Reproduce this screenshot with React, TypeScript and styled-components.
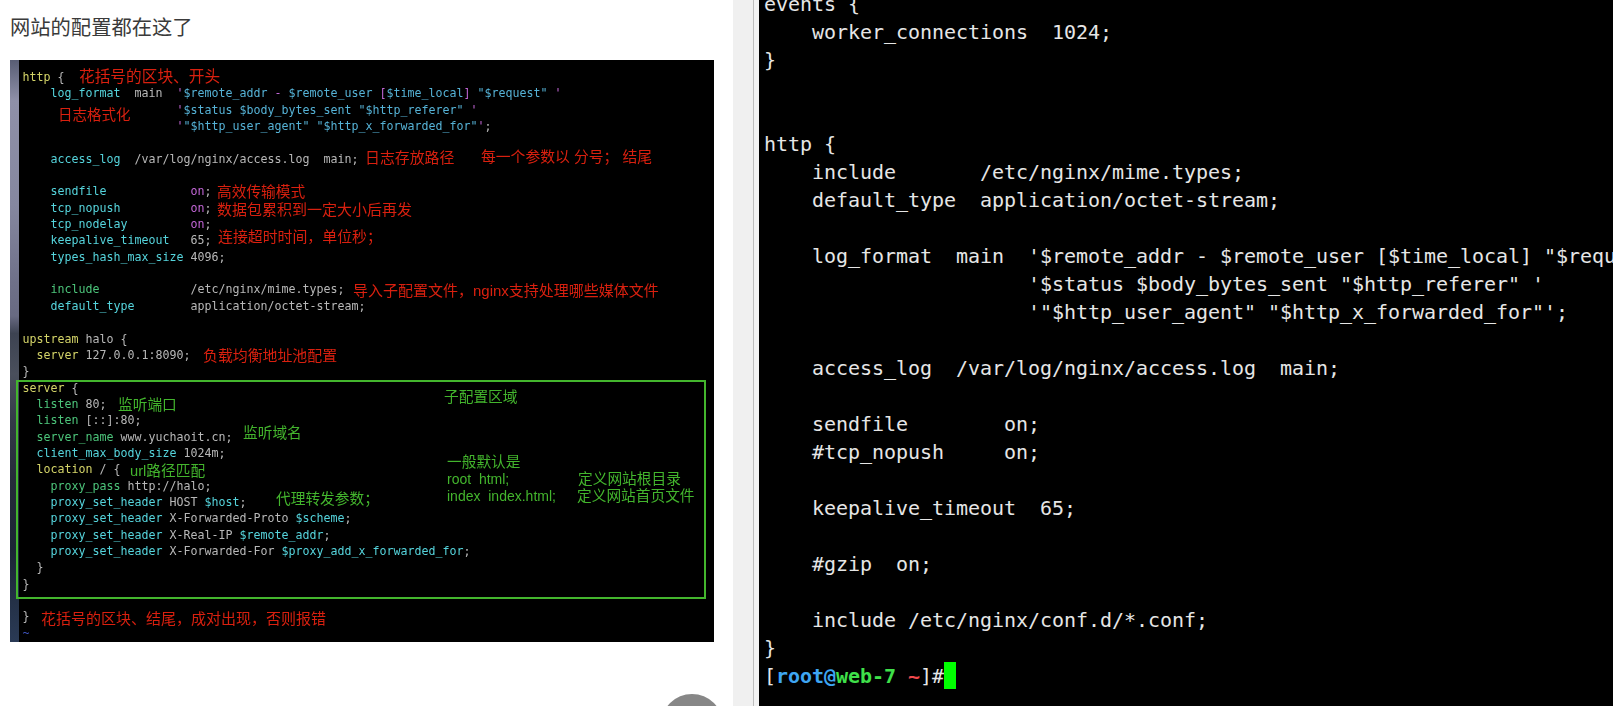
import React from "react";
import styled, { createGlobalStyle } from "styled-components";

const GlobalStyle = createGlobalStyle`
  html, body {
    margin: 0;
    padding: 0;
    background: #fff;
    overflow: hidden;
  }
`;

const Page = styled.div`
  display: flex;
  width: 1613px;
  height: 706px;
  overflow: hidden;
`;

const ArticlePane = styled.div`
  position: relative;
  width: 733px;
  flex: none;
  padding: 12px 0 0 10px;
  box-sizing: border-box;
  background: #fff;
`;

const Heading = styled.p`
  margin: 0 0 20px;
  height: 28px;
  font: 20.3px/28px "Noto Sans CJK SC", "Noto Sans", sans-serif;
  color: #3a3a3a;
`;

const Shot = styled.div`
  position: relative;
  display: flex;
  width: 704px;
  height: 582px;
  background: #000;
  overflow: hidden;
`;

const DesktopStrip = styled.div`
  width: 9px;
  flex: none;
  background: linear-gradient(
    180deg,
    #585d74 0%,
    #8f90a8 7%,
    #85879f 25%,
    #6f7189 38%,
    #686a82 44%,
    #3d4352 47%,
    #4a4f5c 54%,
    #343a48 62%,
    #262c3a 72%,
    #1c2535 84%,
    #2a3a55 100%
  );
`;

const Code = styled.div`
  padding: 9px 0 0 3.5px;
  font: 11.63px/16.35px "DejaVu Sans Mono", monospace;
  color: #b8b8b8;
  white-space: pre;
  filter: blur(0.25px);
`;

const Line = styled.div`
  height: 16.35px;
`;

const Block = styled.span`
  color: #d4d468;
`;
const Directive = styled.span`
  color: #55d4dc;
`;
const Include = styled.span`
  color: #4cc47a;
`;
const Str = styled.span`
  color: #55b2d6;
`;
const Flag = styled.span`
  color: #c266d6;
`;
const Tilde = styled.span`
  color: #3f55c0;
`;

const Note = styled.span<{ $x: number; $y: number; $green?: boolean; $size?: number }>`
  position: absolute;
  left: ${(p) => p.$x - 10}px;
  top: ${(p) => p.$y - 70}px;
  height: 20px;
  font: ${(p) => p.$size ?? 14.7}px/20px "Liberation Sans", "Noto Sans CJK SC", sans-serif;
  color: ${(p) => (p.$green ? "#43b52d" : "#d9200f")};
  white-space: pre;
  filter: blur(0.2px);
`;

const GreenBox = styled.div`
  position: absolute;
  left: 6px;
  top: 320px;
  width: 686px;
  height: 215px;
  border: 2px solid #43b52d;
`;

const ScrollBadge = styled.div`
  position: absolute;
  left: 661px;
  top: 694px;
  width: 62px;
  height: 62px;
  border-radius: 50%;
  background: #878787;
`;

const Gutter = styled.div`
  width: 20px;
  flex: none;
  background: #f0f0f0;
`;

const Divider = styled.div`
  width: 6px;
  flex: none;
  box-sizing: border-box;
  border-left: 1px solid #bdbdbd;
  background: #f3f3f3;
`;

const Terminal = styled.div`
  flex: 1;
  min-width: 0;
  background: #000;
  overflow: hidden;
  padding-left: 5px;
  font: 20px/28px "DejaVu Sans Mono", monospace;
  letter-spacing: -0.04px;
  color: #e6e6e6;
  white-space: pre;
`;

const TermBody = styled.div`
  margin-top: -10px;
`;

const TermLine = styled.div`
  height: 28px;
`;

const PromptBlue = styled.span`
  color: #3ea6f2;
  font-weight: bold;
`;
const PromptGreen = styled.span`
  color: #3fe04a;
  font-weight: bold;
`;
const PromptRed = styled.span`
  color: #f0484c;
  font-weight: bold;
`;
const Cursor = styled.span`
  display: inline-block;
  width: 12px;
  height: 27px;
  vertical-align: top;
  background: #00ff00;
`;

const terminalLines = [
  "events {",
  "    worker_connections  1024;",
  "}",
  "",
  "",
  "http {",
  "    include       /etc/nginx/mime.types;",
  "    default_type  application/octet-stream;",
  "",
  "    log_format  main  '$remote_addr - $remote_user [$time_local] \"$request\" '",
  "                      '$status $body_bytes_sent \"$http_referer\" '",
  "                      '\"$http_user_agent\" \"$http_x_forwarded_for\"';",
  "",
  "    access_log  /var/log/nginx/access.log  main;",
  "",
  "    sendfile        on;",
  "    #tcp_nopush     on;",
  "",
  "    keepalive_timeout  65;",
  "",
  "    #gzip  on;",
  "",
  "    include /etc/nginx/conf.d/*.conf;",
  "}",
];

const redNotes: [number, number, string, number?][] = [
  [79, 77, "花括号的区块、开头", 15.7],
  [58, 115, "日志格式化", 14.5],
  [365, 158, "日志存放路径", 14.9],
  [481, 157, "每一个参数以 分号； 结尾", 14.8],
  [217, 192, "高效传输模式"],
  [217, 210, "数据包累积到一定大小后再发", 15],
  [218, 237, "连接超时时间，单位秒；", 14.9],
  [353, 291, "导入子配置文件，nginx支持处理哪些媒体文件", 15],
  [203, 356, "负载均衡地址池配置", 14.9],
  [41, 619, "花括号的区块、结尾，成对出现，否则报错", 15],
];

const greenNotes: [number, number, string, number?][] = [
  [444, 397, "子配置区域"],
  [118, 405, "监听端口"],
  [243, 433, "监听域名"],
  [130, 471, "url路径匹配"],
  [276, 499, "代理转发参数；", 14.7],
  [447, 462, "一般默认是"],
  [447, 479, "root  html;", 14],
  [578, 479, "定义网站根目录"],
  [447, 496, "index  index.html;", 14],
  [577, 496, "定义网站首页文件"],
];

const App: React.FC = () => {
  return (
    <Page>
      <GlobalStyle />
      <ArticlePane>
        <Heading>网站的配置都在这了</Heading>
        <Shot>
          <DesktopStrip />
          <Code>
            <Line><Block>http</Block> {"{"}</Line>
            <Line>    <Directive>log_format</Directive>  main  <Flag>'</Flag><Str>$remote_addr</Str> <Flag>-</Flag> <Str>$remote_user</Str> <Flag>[</Flag><Str>$time_local</Str><Flag>]</Flag> <Str>"$request"</Str> <Flag>'</Flag></Line>
            <Line>                      <Flag>'</Flag><Str>$status $body_bytes_sent "$http_referer"</Str> <Flag>'</Flag></Line>
            <Line>                      <Flag>'</Flag><Str>"$http_user_agent" "$http_x_forwarded_for"</Str><Flag>'</Flag>;</Line>
            <Line />
            <Line>    <Directive>access_log</Directive>  /var/log/nginx/access.log  main;</Line>
            <Line />
            <Line>    <Directive>sendfile</Directive>            <Flag>on</Flag>;</Line>
            <Line>    <Directive>tcp_nopush</Directive>          <Flag>on</Flag>;</Line>
            <Line>    <Directive>tcp_nodelay</Directive>         <Flag>on</Flag>;</Line>
            <Line>    <Directive>keepalive_timeout</Directive>   65;</Line>
            <Line>    <Directive>types_hash_max_size</Directive> 4096;</Line>
            <Line />
            <Line>    <Include>include</Include>             /etc/nginx/mime.types;</Line>
            <Line>    <Directive>default_type</Directive>        application/octet-stream;</Line>
            <Line />
            <Line><Block>upstream</Block> halo {"{"}</Line>
            <Line>  <Block>server</Block> 127.0.0.1:8090;</Line>
            <Line>{"}"}</Line>
            <Line><Block>server</Block> {"{"}</Line>
            <Line>  <Include>listen</Include> 80;</Line>
            <Line>  <Include>listen</Include> [::]:80;</Line>
            <Line>  <Include>server_name</Include> www.yuchaoit.cn;</Line>
            <Line>  <Directive>client_max_body_size</Directive> 1024m;</Line>
            <Line>  <Block>location</Block> / {"{"}</Line>
            <Line>    <Include>proxy_pass</Include> http://halo;</Line>
            <Line>    <Directive>proxy_set_header</Directive> HOST <Directive>$host</Directive>;</Line>
            <Line>    <Directive>proxy_set_header</Directive> X-Forwarded-Proto <Directive>$scheme</Directive>;</Line>
            <Line>    <Directive>proxy_set_header</Directive> X-Real-IP <Directive>$remote_addr</Directive>;</Line>
            <Line>    <Directive>proxy_set_header</Directive> X-Forwarded-For <Directive>$proxy_add_x_forwarded_for</Directive>;</Line>
            <Line>  {"}"}</Line>
            <Line>{"}"}</Line>
            <Line />
            <Line>{"}"}</Line>
            <Line><Tilde>~</Tilde></Line>
          </Code>
          <GreenBox />
          {redNotes.map(([x, y, text, size]) => (
            <Note key={text} $x={x} $y={y} $size={size}>{text}</Note>
          ))}
          {greenNotes.map(([x, y, text, size]) => (
            <Note key={text} $x={x} $y={y} $size={size} $green>{text}</Note>
          ))}
        </Shot>
        <ScrollBadge />
      </ArticlePane>
      <Gutter />
      <Divider />
      <Terminal>
        <TermBody>
          {terminalLines.map((line, i) => (
            <TermLine key={i}>{line}</TermLine>
          ))}
          <TermLine>
            [<PromptBlue>root@</PromptBlue><PromptGreen>web-7</PromptGreen> <PromptRed>~</PromptRed>]#<Cursor />
          </TermLine>
        </TermBody>
      </Terminal>
    </Page>
  );
};

export default App;
